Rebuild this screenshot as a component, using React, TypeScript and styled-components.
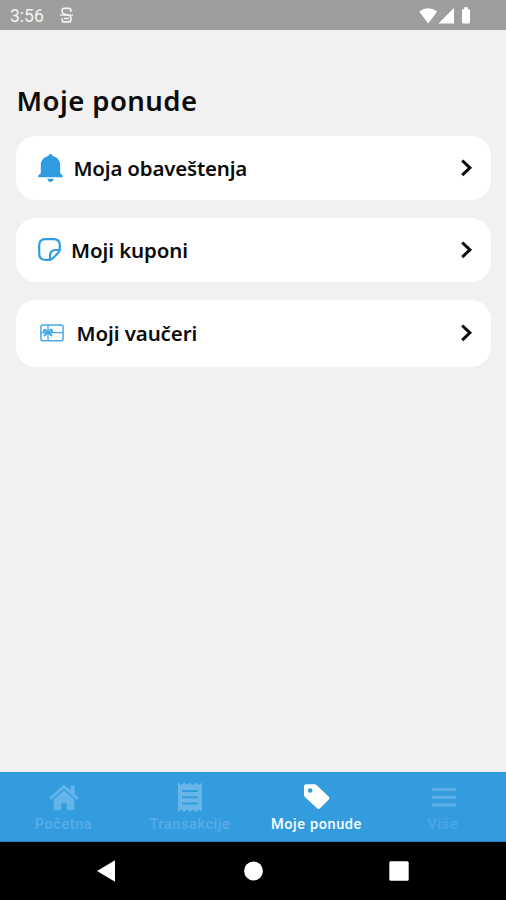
import React from 'react';
import styled, { createGlobalStyle } from 'styled-components';

const GlobalStyle = createGlobalStyle`
  * { box-sizing: border-box; }
  body { margin: 0; background: #f1f1f1; }
  button { border: 0; padding: 0; background: none; font: inherit; color: inherit; text-align: left; }
  svg { display: block; flex: none; }
`;

const Screen = styled.div`
  width: 100%;
  height: 900px;
  display: flex;
  flex-direction: column;
  overflow: hidden;
  background: #f1f1f1;
  color: #0c0c0c;
  font-family: 'Noto Sans', 'Open Sans', sans-serif;
`;

const StatusBar = styled.header`
  height: 30px;
  flex: none;
  display: flex;
  align-items: center;
  padding: 1px 33px 0 10px;
  background: #9e9e9e;
  color: #f5f5f5;
`;

const Clock = styled.time`
  font: 400 17.5px/20px Roboto, sans-serif;
  width: 49.5px;
`;

const StatusIcons = styled.div`
  margin-left: auto;
  display: flex;
  align-items: center;
`;

const Content = styled.main`
  flex: 1;
  padding: 52px 15px 0 16px;
`;

const Title = styled.h1`
  margin: 0;
  height: 54px;
  padding-left: 0.5px;
  font-size: 27.5px;
  line-height: 38px;
  font-weight: 600;
  letter-spacing: 0.45px;
  white-space: nowrap;
`;

const OfferList = styled.div`
  display: flex;
  flex-direction: column;
  gap: 17.75px;
`;

const OfferCard = styled.button<{ $height: number }>`
  width: 100%;
  height: ${(p) => p.$height}px;
  display: flex;
  align-items: center;
  padding: 0 17px 0 22px;
  border-radius: 20px;
  background: #fff;
`;

const IconSlot = styled.span<{ $width: number; $inset: number }>`
  width: ${(p) => p.$width}px;
  padding-left: ${(p) => p.$inset}px;
  flex: none;
`;

const OfferLabel = styled.span<{ $tracking: number }>`
  flex: 1;
  font-size: 20.5px;
  line-height: 30px;
  font-weight: 600;
  letter-spacing: ${(p) => p.$tracking}px;
  white-space: nowrap;
`;

const TabBar = styled.nav`
  height: 70px;
  flex: none;
  display: grid;
  grid-template-columns: repeat(4, 1fr);
  background: #329cdf;
  border-top: 1px solid #2b94d8;
  border-bottom: 1px solid #217fb9;
`;

const Tab = styled.button<{ $color: string; $label: string }>`
  display: flex;
  flex-direction: column;
  align-items: center;
  padding: 9px 0 0 1px;
  color: ${(p) => p.$color};

  span {
    margin: 3px 0.6px 0 0;
    font: 500 14.5px/18px Roboto, sans-serif;
    letter-spacing: 0.6px;
    color: ${(p) => p.$label};
    white-space: nowrap;
  }
`;

const SystemBar = styled.footer`
  height: 58px;
  flex: none;
  display: grid;
  grid-template-columns: repeat(3, 146px);
  justify-content: center;
  justify-items: center;
  align-items: center;
  background: #000;
`;

const Chevron = () => (
  <svg width="14" height="18" viewBox="0 0 14 18" fill="none" stroke="#0b0b0b" strokeWidth="3">
    <path d="M2.2 1.5 9.9 8.800l-7.700 7.300" />
  </svg>
);

const BellIcon = () => (
  <svg width="25" height="29" viewBox="0 0 25 29" fill="#309ce0">
    <path d="M12.500 0c1.200 0 2 .8 2.100 2 4.700.9 7.600 4.400 7.600 9.200v8l2.600 2.400v1.600H.2v-1.600l2.600-2.400v-8c0-4.800 2.900-8.300 7.600-9.200.1-1.200.9-2 2.100-2z" />
    <path d="M9.300 24.800h6.400c-.3 2-1.600 3.200-3.200 3.200s-2.900-1.200-3.200-3.200z" />
  </svg>
);

const StickerIcon = () => (
  <svg width="23" height="23" viewBox="0 0 23 23" fill="none" stroke="#309ce0" strokeWidth="2.200" strokeLinejoin="round">
    <path d="M7.500 1.200h8c4.500 0 6.300 1.800 6.300 6.300v4.600c0 1.600-8 9.700-9.700 9.700H7.500c-4.500 0-6.300-1.800-6.300-6.300v-8c0-4.500 1.800-6.300 6.300-6.300z" />
    <path d="M12 21.600v-3.800c0-3.900 1.900-5.800 5.800-5.800h3.900" />
  </svg>
);

const VoucherIcon = () => (
  <svg width="24" height="18" viewBox="0 0 24 18" fill="none" stroke="#49a8e6" strokeWidth="1.500">
    <rect x=".9" y="1" width="22.200" height="15.800" rx="2" />
    <path d="M8 1v16M1 8.700h22" strokeWidth="1.300" />
    <path strokeWidth="2" d="M8 8.500C5 3.500 2.500 6.500 4.500 8.500H8c3-5 5.500-2 3.500 0H8l-4 3.500M8 8.500l4 3.500" />
  </svg>
);

const HomeIcon = () => (
  <svg width="30" height="31" viewBox="0 0 30 31" fill="currentColor">
    <path d="M15 2.500.3 15.500l1.900 2.200L15 6.600l12.800 11.100 1.900-2.200-4.200-3.700V3.500h-4v4.700z" />
    <path d="M15 8.300 4.700 17.200v9.200q0 1.800 1.800 1.800h5.700v-7h5.600v7h5.700q1.800 0 1.800-1.800v-9.200z" />
  </svg>
);

const ReceiptIcon = () => (
  <svg width="24" height="31" viewBox="0 0 24 31" fill="currentColor" fillRule="evenodd">
    <path d="M0 .5 3 3l3-2.500L9 3l3-2.500L15 3l3-2.500L21 3l3-2.500v29.500l-3-2.500-3 2.500-3-2.500-3 2.500-3-2.500L6 30l-3-2.500L0 30zM4.200 8v2h15.600V8zm0 6.200v2h15.600v-2zm0 6.200v2h15.600v-2z" />
  </svg>
);

const TagIcon = () => (
  <svg width="28" height="31" viewBox="0 0 28 31" fill="currentColor" fillRule="evenodd">
    <path d="M1 4.200Q1 2.200 3 2.200h8.500q1.100 0 2 .8L25.800 14.700q1.400 1.400 0 2.700L17 26.300q-1.500 1.500-2.900 0L1.800 14.900Q1 14.100 1 13zM7.200 6.200a2.300 2.300 0 1 0 0 4.600 2.300 2.300 0 0 0 0-4.600z" />
  </svg>
);

const MenuIcon = () => (
  <svg width="25" height="31" viewBox="0 0 25 31" fill="currentColor">
    <path d="M1 6h24v3H1zM1 13.800h24v3H1zM1 21.500h24v3H1z" />
  </svg>
);

const offers = [
  { label: 'Moja obaveštenja', icon: <BellIcon />, height: 64, slot: 35.5, inset: 0, tracking: -0.2 },
  { label: 'Moji kuponi', icon: <StickerIcon />, height: 64, slot: 33, inset: 0, tracking: -0.1 },
  { label: 'Moji vaučeri', icon: <VoucherIcon />, height: 67, slot: 38.5, inset: 2, tracking: -0.1 },
];

const tabs = [
  { label: 'Početna', icon: <HomeIcon />, color: '#62b4e9', text: '#58ade6' },
  { label: 'Transakcije', icon: <ReceiptIcon />, color: '#67b5e9', text: '#58ade6' },
  { label: 'Moje ponude', icon: <TagIcon />, color: '#ffffff', text: '#f5fbff' },
  { label: 'Više', icon: <MenuIcon />, color: '#5bafe7', text: '#4da7e4' },
];

export default function App() {
  return (
    <Screen>
      <GlobalStyle />
      <StatusBar>
        <Clock>3:56</Clock>
        <svg width="13" height="17" viewBox="0 0 13 17" fill="none" stroke="#f1f1f1" strokeWidth="1.700">
          <path d="M10.800 5V3.300q0-2-2-2H4.200q-2 0-2 2v1.500q0 2 2 2.300l4.600 1.200q2 .5 2 2.300v2.300q0 2-2 2H4.200q-2 0-2-2v-1.700" />
          <path d="M0 8.200h13M4 11.500h5" strokeWidth="1.300" />
        </svg>
        <StatusIcons>
          <svg width="19" height="16" viewBox="0 0 19 16" fill="#fff">
            <path d="M.2 3.500Q9.200-3 18.200 3.500L9.200 15.500z" />
          </svg>
          <svg width="17" height="16" viewBox="0 0 17 16" fill="#fff">
            <path d="M16 0v15.500H.5z" />
          </svg>
          <svg width="18" height="17" viewBox="0 0 18 17" fill="#fff">
            <path d="M9 .3h4V2h.5q1.500 0 1.500 1.500V15q0 1.500-1.500 1.500h-5Q7 16.500 7 15V3.500Q7 2 8.500 2H9z" />
          </svg>
        </StatusIcons>
      </StatusBar>
      <Content>
        <Title>Moje ponude</Title>
        <OfferList>
          {offers.map((o) => (
            <OfferCard key={o.label} $height={o.height}>
              <IconSlot $width={o.slot} $inset={o.inset}>{o.icon}</IconSlot>
              <OfferLabel $tracking={o.tracking}>{o.label}</OfferLabel>
              <Chevron />
            </OfferCard>
          ))}
        </OfferList>
      </Content>
      <TabBar>
        {tabs.map((t) => (
          <Tab key={t.label} $color={t.color} $label={t.text}>
            {t.icon}
            <span>{t.label}</span>
          </Tab>
        ))}
      </TabBar>
      <SystemBar>
        <svg width="20" height="22" viewBox="0 0 20 22" fill="#fff"><path d="M18 .3v21.400L0 11z" /></svg>
        <svg width="20" height="20" viewBox="0 0 20 20" fill="#fff"><circle cx="10.500" cy="10" r="9.400" /></svg>
        <svg width="20" height="20" viewBox="0 0 20 20" fill="#fff"><rect x=".3" y=".3" width="19.400" height="19.400" rx="1.500" /></svg>
      </SystemBar>
    </Screen>
  );
}
